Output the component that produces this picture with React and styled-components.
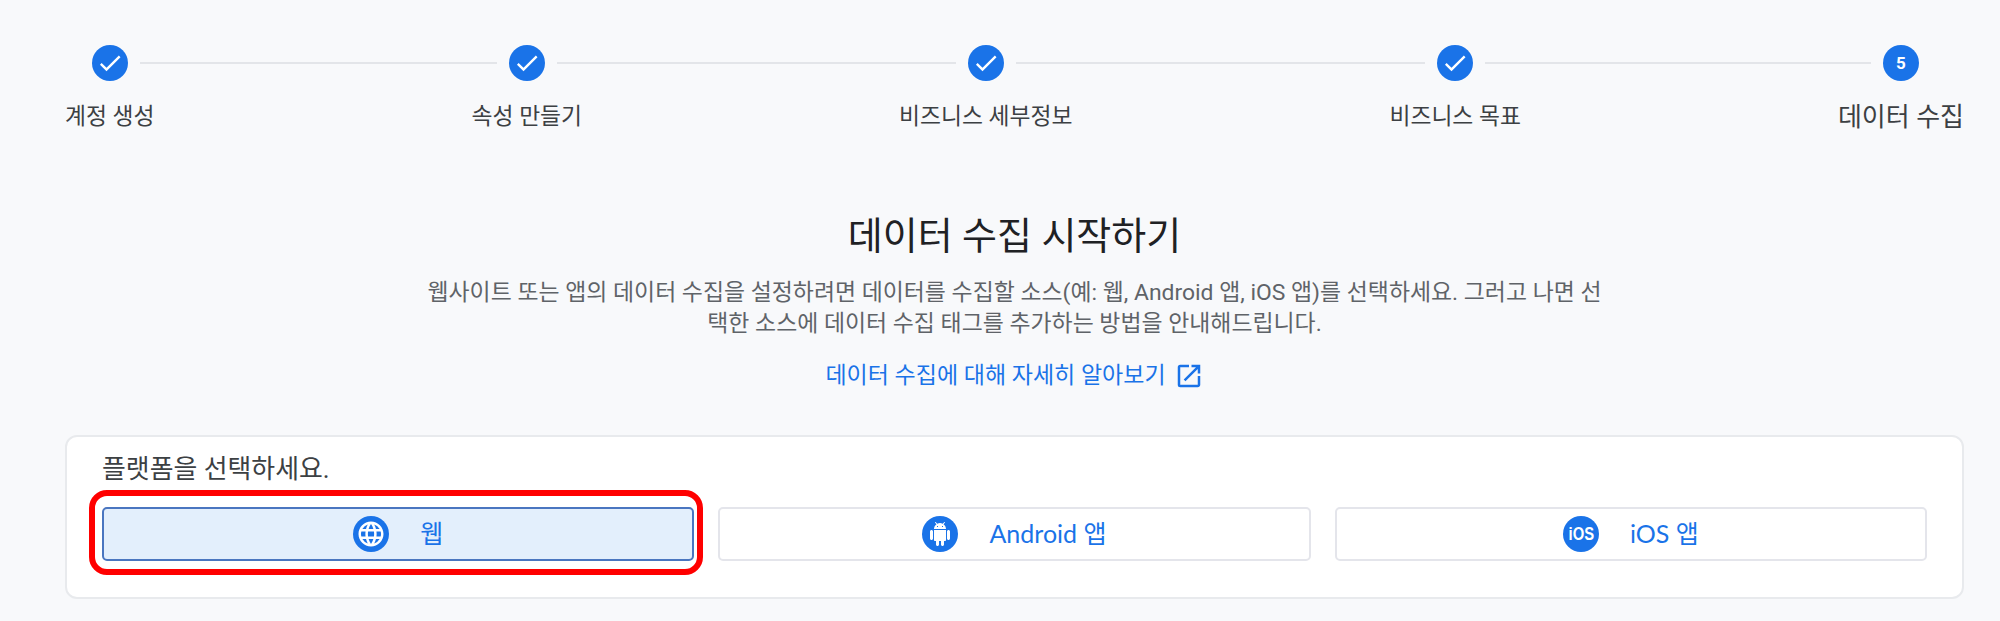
import styled, { createGlobalStyle } from 'styled-components'
import { MdCheck, MdLanguage, MdOpenInNew } from 'react-icons/md'

const GlobalStyle = createGlobalStyle`
  * {
    box-sizing: border-box;
  }

  body {
    margin: 0;
    background: #f8f9fb;
    font-family: Roboto, "Noto Sans CJK KR", sans-serif;
  }
`

const Page = styled.div`
  width: 2000px;
  height: 621px;
  overflow: hidden;
  padding: 45px 36px 0 65px;
  background: #f8f9fb;
`

const Stepper = styled.div`
  display: flex;
  align-items: flex-start;
`

const Step = styled.div`
  display: flex;
  flex-direction: column;
  align-items: stretch;
  flex: none;
`

const StepHead = styled.div`
  display: flex;
  align-items: center;
  gap: 12px;
  height: 36px;
`

const Segment = styled.div`
  flex: 1;
  height: 2px;
  background: ${props => (props.$hidden ? 'transparent' : '#e3e5e9')};
`

const Connector = styled.div`
  flex: 1;
  height: 2px;
  margin-top: 17px;
  background: #e3e5e9;
`

const StepCircle = styled.div`
  width: 36px;
  height: 36px;
  flex: none;
  border-radius: 50%;
  display: flex;
  align-items: center;
  justify-content: center;
  background: #1a73e8;
  color: #fff;
  font-size: 17px;
  font-weight: 700;
`

const StepLabel = styled.div`
  margin-top: 21px;
  line-height: 30px;
  font-size: ${props => (props.$active ? '26px' : '22.8px')};
  color: #3c4043;
  white-space: nowrap;
  text-align: center;
`

const Intro = styled.div`
  display: flex;
  flex-direction: column;
  align-items: center;
`

const Title = styled.h1`
  margin: 80px 0 0;
  font-size: 38px;
  line-height: 48px;
  font-weight: 400;
  color: #202124;
`

const Description = styled.p`
  margin: 17px 0 0;
  font-size: 22.9px;
  line-height: 31px;
  color: #5f6368;
  text-align: center;
  white-space: nowrap;
`

const LearnMore = styled.a`
  margin-top: 22px;
  display: flex;
  align-items: center;
  gap: 8px;
  font-size: 23px;
  line-height: 30px;
  color: #1a73e8;
  text-decoration: none;
`

const Card = styled.section`
  margin-top: 44px;
  height: 164px;
  padding: 17px 35px 0;
  background: #fff;
  border: 2px solid #e8eaed;
  border-radius: 12px;
`

const CardTitle = styled.div`
  line-height: 30px;
  font-size: 25.9px;
  color: #3c4043;
`

const Platforms = styled.div`
  margin-top: 23px;
  display: grid;
  grid-template-columns: repeat(3, 1fr);
  gap: 24px;
`

const PlatformButton = styled.button`
  position: relative;
  height: 54px;
  display: flex;
  align-items: center;
  justify-content: center;
  gap: 31px;
  padding: 0;
  border: 2px solid ${props => (props.$selected ? '#4a76c0' : '#e4e5eb')};
  border-radius: 5px;
  background: ${props => (props.$selected ? '#e3effc' : '#fff')};
  color: #1a73e8;
  font-family: Lato, "Noto Sans CJK KR", sans-serif;
  font-size: 25px;
`

const PlatformName = styled.span`
  margin-bottom: 4px;
`

const PlatformIcon = styled.span`
  width: 36px;
  height: 36px;
  flex: none;
  border-radius: 50%;
  display: flex;
  align-items: center;
  justify-content: center;
  background: #1a73e8;
  color: #fff;
`

const IosMark = styled.span`
  font-family: "Liberation Sans", sans-serif;
  font-size: 19px;
  font-weight: 700;
  transform: scaleX(0.78);
`

const Highlight = styled.span`
  position: absolute;
  top: -19px;
  left: -15px;
  right: -11px;
  bottom: -16px;
  border: 6px solid #ff0000;
  border-radius: 18px;
  pointer-events: none;
`

const steps = [
  { label: '계정 생성' },
  { label: '속성 만들기' },
  { label: '비즈니스 세부정보' },
  { label: '비즈니스 목표' },
  { label: '데이터 수집', number: 5 },
]

function AndroidIcon() {
  return (
    <svg width="24" height="24" viewBox="0 0 24 24" fill="currentColor">
      <path d="M6 18c0 .55.45 1 1 1h1v3.5c0 .83.67 1.5 1.5 1.5s1.5-.67 1.5-1.5V19h2v3.5c0 .83.67 1.5 1.5 1.5s1.5-.67 1.5-1.5V19h1c.55 0 1-.45 1-1V8H6v10zM3.5 8C2.67 8 2 8.67 2 9.5v7c0 .83.67 1.5 1.5 1.5S5 17.33 5 16.5v-7C5 8.67 4.33 8 3.5 8zm17 0c-.83 0-1.5.67-1.5 1.5v7c0 .83.67 1.5 1.5 1.5s1.5-.67 1.5-1.5v-7c0-.83-.67-1.5-1.5-1.5zm-4.97-5.84l1.3-1.3c.2-.2.2-.51 0-.71-.2-.2-.51-.2-.71 0l-1.48 1.48C13.85 1.23 12.95 1 12 1c-.96 0-1.86.23-2.66.63L7.85.15c-.2-.2-.51-.2-.71 0-.2.2-.2.51 0 .71l1.31 1.31C6.97 3.26 6 5.01 6 7h12c0-1.99-.97-3.75-2.47-4.84zM10 5H9V4h1v1zm5 0h-1V4h1v1z" />
    </svg>
  )
}

function App() {
  return (
    <Page>
      <GlobalStyle />
      <Stepper>
        {steps.flatMap((step, i) => {
          const last = i === steps.length - 1
          const node = (
            <Step key={step.label}>
              <StepHead>
                <Segment $hidden={i === 0} />
                <StepCircle>{step.number || <MdCheck size={28} />}</StepCircle>
                <Segment $hidden={last} />
              </StepHead>
              <StepLabel $active={last}>{step.label}</StepLabel>
            </Step>
          )
          return last ? [node] : [node, <Connector key={`line-${i}`} />]
        })}
      </Stepper>

      <Intro>
        <Title>데이터 수집 시작하기</Title>
        <Description>
          웹사이트 또는 앱의 데이터 수집을 설정하려면 데이터를 수집할 소스(예: 웹, Android 앱, iOS 앱)를 선택하세요. 그러고 나면 선
          <br />
          택한 소스에 데이터 수집 태그를 추가하는 방법을 안내해드립니다.
        </Description>
        <LearnMore href="#">
          데이터 수집에 대해 자세히 알아보기
          <MdOpenInNew size={30} />
        </LearnMore>
      </Intro>

      <Card>
        <CardTitle>플랫폼을 선택하세요.</CardTitle>
        <Platforms>
          <PlatformButton $selected>
            <PlatformIcon><MdLanguage size={30} /></PlatformIcon>
            <PlatformName>웹</PlatformName>
            <Highlight />
          </PlatformButton>
          <PlatformButton>
            <PlatformIcon><AndroidIcon /></PlatformIcon>
            <PlatformName>Android 앱</PlatformName>
          </PlatformButton>
          <PlatformButton>
            <PlatformIcon><IosMark>iOS</IosMark></PlatformIcon>
            <PlatformName>iOS 앱</PlatformName>
          </PlatformButton>
        </Platforms>
      </Card>
    </Page>
  )
}

export default App
